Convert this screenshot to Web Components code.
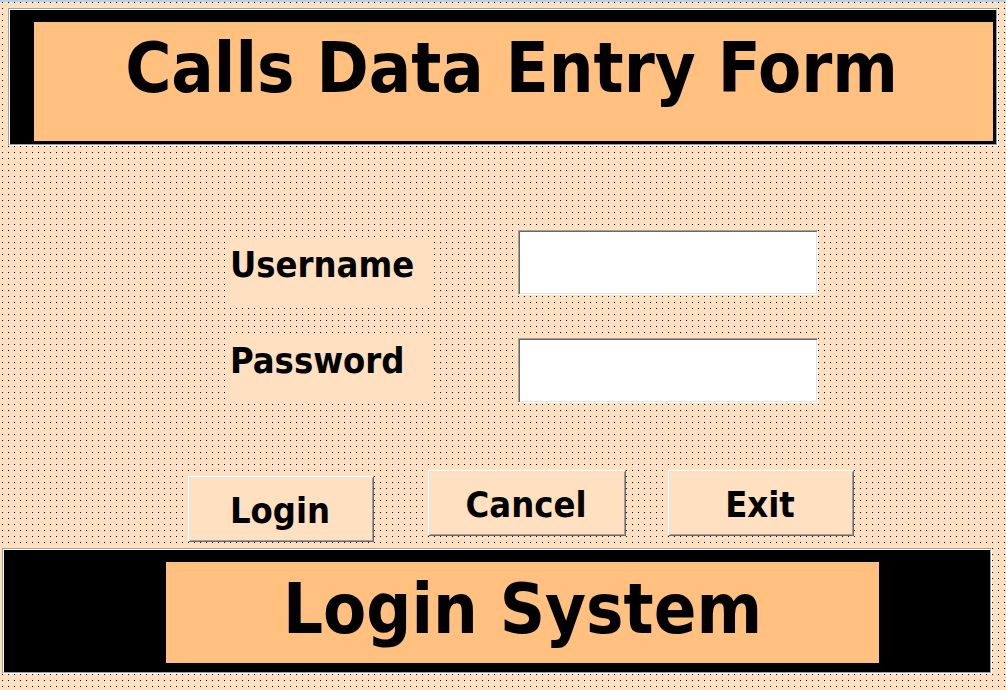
<!DOCTYPE html>
<html lang="en">
<head>
<meta charset="utf-8">
<title>Calls Data Entry Form</title>
<style>
  html { height: 100%; }
  body {
    margin: 0;
    min-height: 100%;
    --surface: #ffe0c0;
    --accent: #ffc080;
    --shade: #a0a0a0;
    --dark: #696969;
    color: #000;
    font: bold 36px/44px "DejaVu Sans Condensed", "DejaVu Sans", Tahoma, sans-serif;
  }
</style>
</head>
<body>
<login-form></login-form>

<template id="login-form-template">
  <style>
    :host {
      display: flex;
      flex-direction: column;
      box-sizing: border-box;
      min-height: 100vh;
      padding: 6px 0 16px;
      border-top: 2px solid #b8d0ee;
      background: url("data:image/svg+xml,%3Csvg xmlns='http://www.w3.org/2000/svg' width='6' height='6'%3E%3Crect x='2' width='1' height='1'/%3E%3C/svg%3E") 0 0 / 6px 6px var(--surface);
    }
    title-banner.top { margin: 0 8px; --banner-columns: 24fr 959fr 3fr; --banner-pad: 12px 0 3px; --title-pad: 2px 4px 29px 0; }
    title-banner.bottom { margin: 0 14px 0 2px; --banner-columns: 162fr 713fr 111fr; --banner-pad: 12px 0 9px; --title-pad: 3px 0 10px; }
    .fields { display: flex; flex-direction: column; margin-top: 84px; }
    form-field:nth-child(1) { --label-top: 7px; --box-top: 0px; }
    form-field:nth-child(2) { --label-top: 25px; --box-top: 30px; }
    .actions {
      display: grid;
      grid-template-columns: 188fr 186fr 54fr 198fr 42fr 186fr 152fr;
      margin: 66px 0 6px;
      align-items: start;
    }
    form-button:nth-child(1) { grid-column: 2; margin-top: 6px; }
    form-button:nth-child(2) { grid-column: 4; }
    form-button:nth-child(3) { grid-column: 6; }
  </style>
  <title-banner class="top">Calls Data Entry Form</title-banner>
  <div class="fields">
    <form-field>Username</form-field>
    <form-field type="password">Password</form-field>
  </div>
  <div class="actions">
    <form-button>Login</form-button>
    <form-button>Cancel</form-button>
    <form-button>Exit</form-button>
  </div>
  <title-banner class="bottom">Login System</title-banner>
</template>

<template id="title-banner-template">
  <style>
    :host {
      display: block;
      border: 1px solid;
      border-color: var(--shade) #fff #fff var(--shade);
    }
    .inner {
      display: grid;
      grid-template-columns: var(--banner-columns);
      padding: var(--banner-pad);
      border: 1px solid;
      border-color: #fff var(--shade) var(--shade) #fff;
      background: #000 padding-box;
    }
    h1 {
      grid-column: 2;
      margin: 0;
      padding: var(--title-pad);
      background: var(--accent);
      font-size: 70px;
      line-height: 88px;
      text-align: center;
      white-space: nowrap;
    }
  </style>
  <div class="inner"><h1><slot></slot></h1></div>
</template>

<template id="form-field-template">
  <style>
    :host {
      display: grid;
      grid-template-columns: 225fr 209fr 84fr 300fr 188fr;
      align-items: start;
    }
    label {
      grid-column: 2;
      box-sizing: border-box;
      height: 71px;
      margin-top: var(--label-top);
      padding: 6px 0 0 5px;
      background: var(--surface);
    }
    input {
      grid-column: 4;
      box-sizing: border-box;
      width: 100%;
      height: 65px;
      margin: var(--box-top) 0 0;
      padding: 4px 8px;
      border: 1px solid;
      border-color: var(--shade) #fff #fff var(--shade);
      border-radius: 0;
      outline: none;
      background: #fff;
      box-shadow: inset 1px 1px var(--dark), inset -1px -1px #e3e3e3;
      font: inherit;
    }
  </style>
  <label for="box"><slot></slot></label>
  <input id="box">
</template>

<template id="form-button-template">
  <style>
    :host { display: block; }
    button {
      display: block;
      box-sizing: border-box;
      width: 100%;
      height: 66px;
      padding: 4px 2px 0 0;
      border: 1px solid;
      border-color: #fff var(--dark) var(--dark) #fff;
      border-radius: 0;
      background: var(--surface);
      box-shadow: inset 1px 1px #e3e3e3, inset -1px -1px var(--shade);
      color: inherit;
      font: inherit;
    }
  </style>
  <button type="button"><slot></slot></button>
</template>

<script>
  class TemplateElement extends HTMLElement {
    constructor() {
      super();
      const template = document.getElementById(this.localName + "-template");
      this.attachShadow({ mode: "open" }).append(template.content.cloneNode(true));
    }
  }
  class TitleBanner extends TemplateElement {}
  class FormButton extends TemplateElement {}
  class FormField extends TemplateElement {
    connectedCallback() {
      this.shadowRoot.querySelector("input").type = this.getAttribute("type") || "text";
    }
  }
  class LoginForm extends TemplateElement {}
  customElements.define("title-banner", TitleBanner);
  customElements.define("form-button", FormButton);
  customElements.define("form-field", FormField);
  customElements.define("login-form", LoginForm);
</script>
</body>
</html>
